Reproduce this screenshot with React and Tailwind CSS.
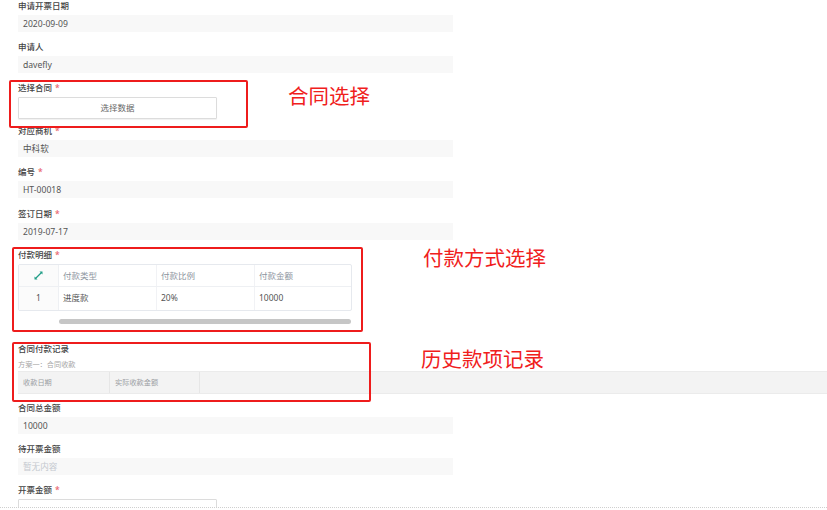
import React from 'react';

function Label({ text, required }) {
  return (
    <div className="h-[15px] pb-[3px] text-[8.5px] leading-[12px] text-[#444] font-medium">
      {text}
      {required && <span className="ml-[3px] text-[#e8606a]">*</span>}
    </div>
  );
}

function ReadField({ label, value, required, muted, className = 'mb-[9px]' }) {
  return (
    <div className={className}>
      <Label text={label} required={required} />
      <div className={`h-[17px] bg-[#f8f8f8] pl-[5px] text-[8.6px] leading-[18px] ${muted ? 'text-[#c4c8cf]' : 'text-[#555]'}`}>
        {value}
      </div>
    </div>
  );
}

function Annotation({ className, text }) {
  return <div className={`absolute text-[20.5px] leading-[24px] text-[#f0201c] whitespace-nowrap ${className}`}>{text}</div>;
}

function RedBox({ className }) {
  return <div className={`absolute border-2 border-[#ee1c1c] rounded-[2px] ${className}`} />;
}

export default function App() {
  return (
    <div className="relative h-[510px] w-[827px] overflow-hidden bg-white font-['Noto_Sans','Noto_Sans_CJK_SC',sans-serif]">
      <div className="w-[435px] ml-[18px]">
        <ReadField label="申请开票日期" value="2020-09-09" />
        <ReadField label="申请人" value="davefly" />

        <div className="mb-[6px]">
          <Label text="选择合同" required />
          <button className="h-[22px] w-[199px] block border border-[#dcdcdc] rounded-[1px] bg-white text-[8.5px] text-[#666] shadow-[0_1px_1px_rgba(0,0,0,0.06)]">
            选择数据
          </button>
        </div>

        <ReadField label="对应商机" value="中科软" required />
        <ReadField label="编号" value="HT-00018" required className="mb-[10px]" />
        <ReadField label="签订日期" value="2019-07-17" required />

        <Label text="付款明细" required />
        <div className="w-[334px] border border-[#e6e9ee] rounded-[2px] text-[8.5px]">
          <div className="grid grid-cols-[40px_98px_98px_1fr] h-[22px] leading-[21px] border-b border-[#eef0f3] text-[#8d949e]">
            <div className="flex items-center justify-center border-r border-[#eef0f3] bg-[#fbfbfb]">
              <svg width="9" height="9" viewBox="0 0 9 9" fill="#1f9d86" stroke="#1f9d86">
                <path d="M1.5 7.5 L7.5 1.5" strokeWidth="1.2" />
                <path d="M0.5 5.5 L0.5 8.5 L3.5 8.5 Z" stroke="none" />
                <path d="M5.5 0.5 L8.5 0.5 L8.5 3.5 Z" stroke="none" />
              </svg>
            </div>
            <div className="pl-[4px] border-r border-[#f1f2f5]">付款类型</div>
            <div className="pl-[4px] border-r border-[#f1f2f5]">付款比例</div>
            <div className="pl-[4px]">付款金额</div>
          </div>
          <div className="grid grid-cols-[40px_98px_98px_1fr] h-[23px] leading-[22px] text-[#555]">
            <div className="text-center border-r border-[#eef0f3] bg-[#fbfbfb]">1</div>
            <div className="pl-[4px] border-r border-[#f1f2f5]">进度款</div>
            <div className="pl-[4px] border-r border-[#f1f2f5]">20%</div>
            <div className="pl-[4px]">10000</div>
          </div>
        </div>
        <div className="ml-[41px] mt-[8px] h-[5px] w-[292px] rounded-full bg-[#c6c6c6]" />

        <div className="mt-[19px] h-[12px] text-[8.5px] leading-[12px] font-medium text-[#444]">合同付款记录</div>
        <div className="mt-[2px] h-[14px] text-[7.2px] leading-[14px] text-[#a6a6a6]">方案一：合同收款</div>
      </div>

      <div className="ml-[18px] h-[23px] flex border-y border-[#ebebeb] bg-[#f3f3f3] text-[7.2px] leading-[21px] text-[#9b9ea3]">
        <div className="w-[92px] pl-[5px] border-r border-[#e6e6e6]">收款日期</div>
        <div className="w-[90px] pl-[5px] border-r border-[#e6e6e6]">实际收款金额</div>
      </div>

      <div className="w-[435px] ml-[18px] mt-[8px]">
        <ReadField label="合同总金额" value="10000" className="mb-[9px]" />
        <ReadField label="待开票金额" value="暂无内容" muted />
        <Label text="开票金额" required />
        <div className="h-[22px] w-[199px] border border-[#dcdcdc] rounded-[1px] bg-white" />
      </div>

      {/* annotations */}
      <RedBox className="left-[9px] top-[80px] h-[48px] w-[239px]" />
      <RedBox className="left-[12px] top-[247px] h-[85px] w-[351px]" />
      <RedBox className="left-[12px] top-[342px] h-[60px] w-[359px]" />
      <Annotation className="left-[288px] top-[84px]" text="合同选择" />
      <Annotation className="left-[423px] top-[246px]" text="付款方式选择" />
      <Annotation className="left-[421px] top-[347px]" text="历史款项记录" />

      <div className="absolute left-0 right-0 top-[507px] h-[3px] bg-white border-t border-dotted border-[#cfcfcf]" />
    </div>
  );
}
